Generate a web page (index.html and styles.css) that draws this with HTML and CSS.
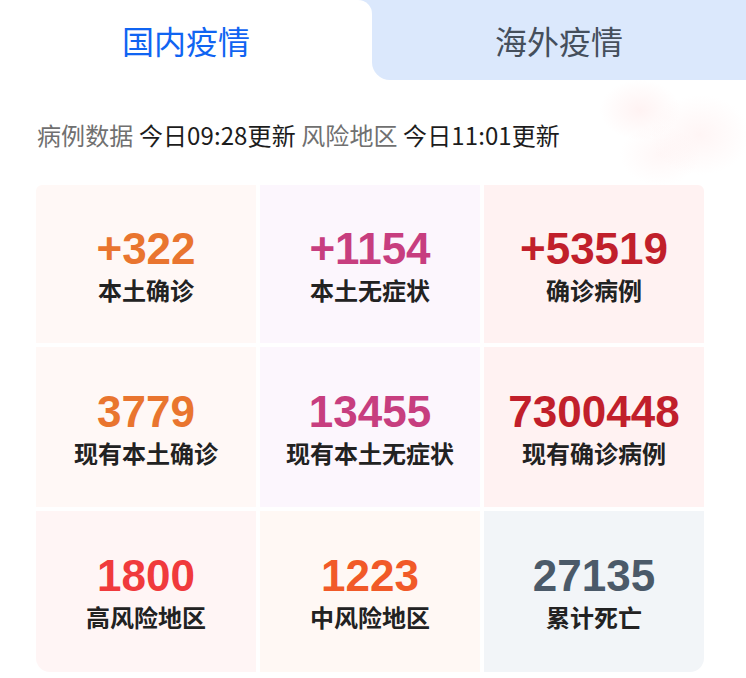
FILE: index.html
```html
<!DOCTYPE html>
<html lang="zh-CN">
<head>
<meta charset="utf-8">
<title>疫情数据</title>
<link rel="stylesheet" href="styles.css">
</head>
<body>
<div class="page">
  <div class="tabs">
    <div class="tab tab-active">国内疫情</div>
    <div class="tab tab-other">海外疫情</div>
  </div>
  <div class="update">
    <span class="muted">病例数据</span> 今日09:28更新 <span class="muted">风险地区</span> 今日11:01更新
  </div>
  <div class="grid">
    <div class="cell bg-peach"><div class="num c-orange">+322</div><div class="label">本土确诊</div></div>
    <div class="cell bg-lavender"><div class="num c-magenta">+1154</div><div class="label">本土无症状</div></div>
    <div class="cell bg-pink"><div class="num c-darkred">+53519</div><div class="label">确诊病例</div></div>
    <div class="cell bg-peach"><div class="num c-orange">3779</div><div class="label">现有本土确诊</div></div>
    <div class="cell bg-lavender"><div class="num c-magenta">13455</div><div class="label">现有本土无症状</div></div>
    <div class="cell bg-pink"><div class="num c-darkred">7300448</div><div class="label">现有确诊病例</div></div>
    <div class="cell bg-rose"><div class="num c-red">1800</div><div class="label">高风险地区</div></div>
    <div class="cell bg-cream"><div class="num c-orangered">1223</div><div class="label">中风险地区</div></div>
    <div class="cell bg-slate"><div class="num c-slate">27135</div><div class="label">累计死亡</div></div>
  </div>
</div>
</body>
</html>
```
FILE: styles.css
```css
html, body {
  margin: 0;
  padding: 0;
  background: #ffffff;
}
body {
  font-family: "Noto Sans CJK SC", "Noto Sans", sans-serif;
  width: 746px;
  height: 678px;
  overflow: hidden;
}
.page {
  display: flex;
  flex-direction: column;
}
.tabs {
  display: flex;
  height: 80px;
  background: linear-gradient(#dbe8fc, #dbe8fc) no-repeat right top / calc(100% - 350px) 30px;
}
.tab {
  display: flex;
  align-items: center;
  justify-content: center;
  font-size: 32px;
  line-height: 1;
}
.tab-active {
  width: 372px;
  background: #ffffff;
  color: #1064f2;
  border-top-right-radius: 14px;
}
.tab-other {
  flex: 1;
  background: #dbe8fc;
  color: #454f5c;
  border-bottom-left-radius: 18px;
}
.update {
  height: 105px;
  padding-left: 37px;
  padding-top: 38px;
  box-sizing: border-box;
  font-size: 24px;
  line-height: 34px;
  color: #1c1c1c;
  letter-spacing: 0.1px;
  background:
    radial-gradient(ellipse 40px 30px at 640px 30px, rgba(255, 228, 228, 0.45), rgba(255, 255, 255, 0)),
    radial-gradient(ellipse 50px 40px at 700px 55px, rgba(255, 230, 230, 0.4), rgba(255, 255, 255, 0)),
    radial-gradient(ellipse 40px 30px at 660px 75px, rgba(255, 232, 232, 0.35), rgba(255, 255, 255, 0));
}
.muted {
  color: #707070;
}
.grid {
  margin-left: 36px;
  width: 668px;
  display: grid;
  grid-template-columns: repeat(3, 1fr);
  grid-template-rows: 158px 160px 161px;
  gap: 4px;
  border-radius: 6px 6px 14px 14px;
  overflow: hidden;
}
.cell {
  display: flex;
  flex-direction: column;
  align-items: center;
  justify-content: center;
  padding-top: 3px;
}
.num {
  font-family: "Liberation Sans", Arial, sans-serif;
  font-weight: bold;
  font-size: 44px;
  line-height: 48px;
}
.label {
  font-weight: bold;
  font-size: 24px;
  line-height: 34px;
  color: #222222;
}
.bg-peach { background: #fff8f6; }
.bg-lavender { background: #fcf6fd; }
.bg-pink { background: #fff2f2; }
.bg-rose { background: #fff5f5; }
.bg-cream { background: #fff8f4; }
.bg-slate { background: #f2f5f8; }
.c-orange { color: #e9752f; }
.c-magenta { color: #c73e7f; }
.c-darkred { color: #c11f2b; }
.c-red { color: #f03a3c; }
.c-orangered { color: #f15a28; }
.c-slate { color: #4b5a69; }
```
